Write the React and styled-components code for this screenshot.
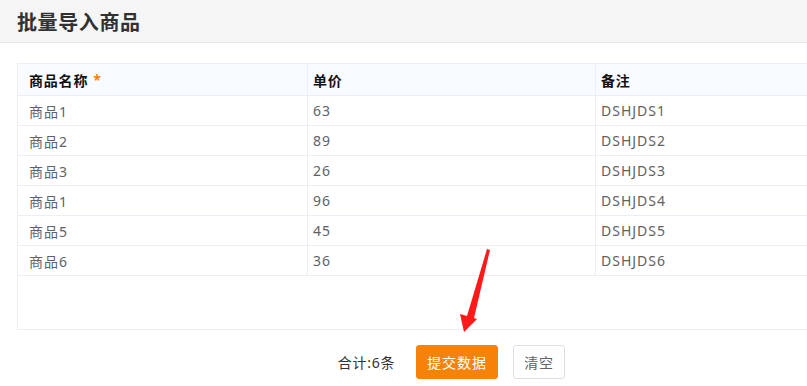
import styled, {createGlobalStyle} from "styled-components";

const GlobalStyle = createGlobalStyle`
  html, body {
    margin: 0;
    padding: 0;
    background: #fff;
    overflow: hidden;
  }
  body {
    font-family: "Microsoft YaHei", "Noto Sans", "Noto Sans CJK SC", sans-serif;
  }
`;

const Page = styled.div`
  position: relative;
  width: 807px;
  height: 386px;
  overflow: hidden;
`;

const Header = styled.div`
  height: 43px;
  background: #f5f5f5;
  border-bottom: 1px solid #e6e6e6;
  display: flex;
  align-items: center;
  padding-left: 17px;
  box-sizing: border-box;
`;

const Title = styled.h1`
  margin: 0;
  font-size: 20px;
  font-weight: 700;
  color: #303133;
  letter-spacing: 0.6px;
`;

const TableBox = styled.div`
  margin: 20px 0 0 17px;
  width: 900px;
  height: 267px;
  border: 1px solid #ebeef5;
  box-sizing: border-box;
`;

const Grid = styled.div`
  display: grid;
  grid-template-columns: 289px 288px 1fr;
`;

const HeadCell = styled.div`
  height: 32px;
  background: #f8fbff;
  border-bottom: 1px solid #ebeef5;
  border-left: ${(p) => (p.$first ? "none" : "1px solid #ebeef5")};
  display: flex;
  align-items: center;
  padding-left: ${(p) => (p.$first ? "11px" : "5px")};
  box-sizing: border-box;
  font-size: 14px;
  font-weight: 700;
  letter-spacing: 0.8px;
  color: #111;
`;

const Star = styled.span`
  color: #f5830a;
  margin-left: 5px;
  font-weight: 700;
`;

const Cell = styled.div`
  height: 30px;
  border-bottom: 1px solid #ebeef5;
  border-left: ${(p) => (p.$first ? "none" : "1px solid #ebeef5")};
  display: flex;
  align-items: center;
  padding-left: ${(p) => (p.$first ? "11px" : "5px")};
  box-sizing: border-box;
  font-size: 14px;
  letter-spacing: 1px;
  color: #606266;
`;

const Footer = styled.div`
  display: flex;
  justify-content: center;
  align-items: center;
  gap: 15px;
  margin-top: 15px;
  padding-left: 96px;
`;

const Total = styled.span`
  font-size: 14px;
  letter-spacing: 0.7px;
  color: #303133;
  margin-right: 6px;
`;

const Button = styled.button`
  height: 34px;
  padding: 0 10px;
  border-radius: 3px;
  font-family: inherit;
  font-size: 14px;
  letter-spacing: 1px;
  border: 1px solid ${(p) => (p.$primary ? "#f5830a" : "#dcdfe6")};
  background: ${(p) => (p.$primary ? "#f5830a" : "#fff")};
  color: ${(p) => (p.$primary ? "#fff" : "#606266")};
  cursor: pointer;
`;

const Arrow = styled.svg`
  position: absolute;
  left: 0;
  top: 0;
  pointer-events: none;
`;

const rows = [
  ["商品1", "63", "DSHJDS1"],
  ["商品2", "89", "DSHJDS2"],
  ["商品3", "26", "DSHJDS3"],
  ["商品1", "96", "DSHJDS4"],
  ["商品5", "45", "DSHJDS5"],
  ["商品6", "36", "DSHJDS6"],
];

const App = () => {
  return (
    <Page>
      <GlobalStyle />
      <Header>
        <Title>批量导入商品</Title>
      </Header>
      <TableBox>
        <Grid>
          <HeadCell $first>
            商品名称<Star>*</Star>
          </HeadCell>
          <HeadCell>单价</HeadCell>
          <HeadCell>备注</HeadCell>
          {rows.map((r, i) =>
            r.map((v, j) => (
              <Cell key={i + "-" + j} $first={j === 0}>
                {v}
              </Cell>
            ))
          )}
        </Grid>
      </TableBox>
      <Footer>
        <Total>合计:6条</Total>
        <Button $primary>提交数据</Button>
        <Button>清空</Button>
      </Footer>
      <Arrow width="807" height="386">
        <polygon
          points="487,249 490,250 474,318 477,319 464,332 460,314 467,316"
          fill="#ff1a1a"
        />
      </Arrow>
    </Page>
  );
};

export default App;
